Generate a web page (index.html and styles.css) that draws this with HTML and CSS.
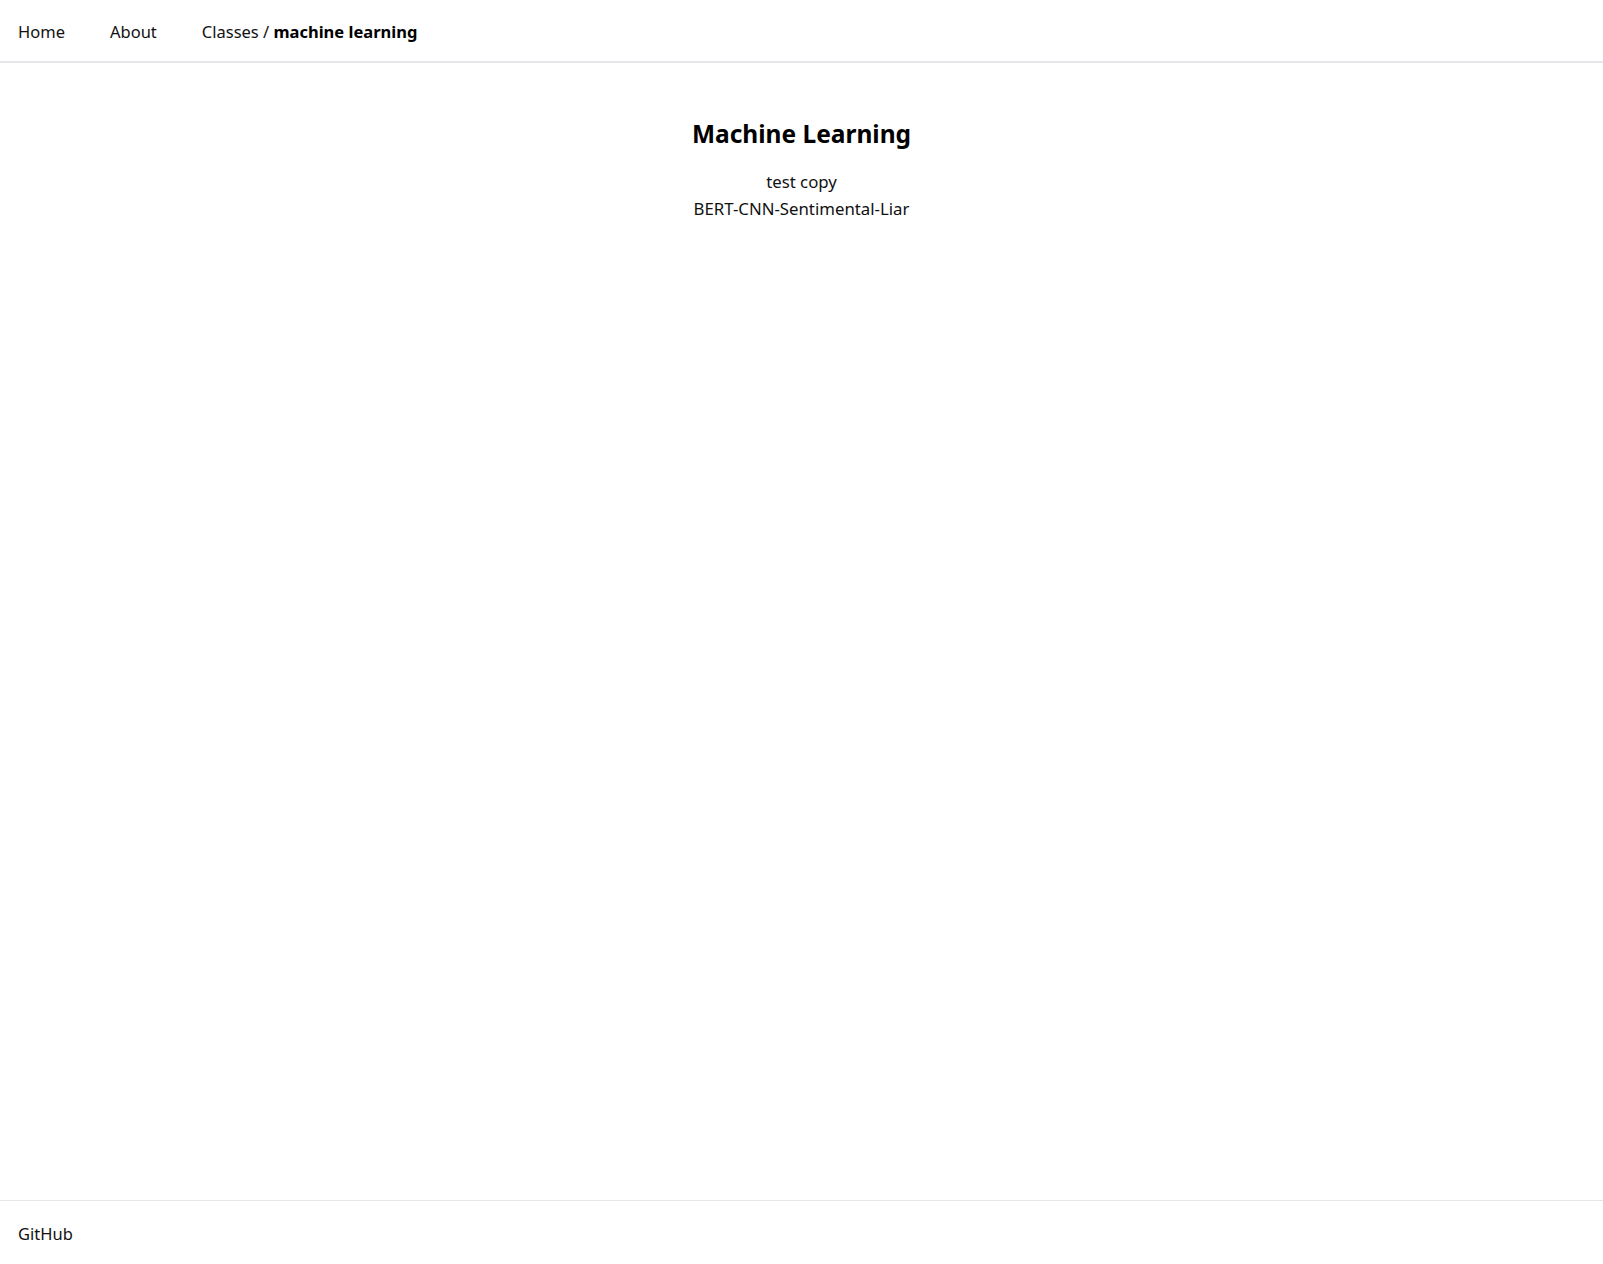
FILE: index.html
```html
<!DOCTYPE html>
<html lang="en">
<head>
<meta charset="utf-8">
<title>Machine Learning</title>
<link rel="stylesheet" href="styles.css">
</head>
<body>
<div class="page">
  <header class="topbar">
    <nav class="nav">
      <a class="nav-link" href="#">Home</a>
      <a class="nav-link" href="#">About</a>
      <span class="nav-link crumb">Classes / <strong>machine learning</strong></span>
    </nav>
  </header>
  <main class="content">
    <h1 class="title">Machine Learning</h1>
    <ul class="items">
      <li>test copy</li>
      <li>BERT-CNN-Sentimental-Liar</li>
    </ul>
  </main>
  <footer class="footer">
    <a class="nav-link" href="#">GitHub</a>
  </footer>
</div>
</body>
</html>
```

FILE: styles.css
```css
html, body {
  margin: 0;
  padding: 0;
  background: #fff;
}
body {
  font-family: "Noto Sans", "Open Sans", sans-serif;
  font-size: 16.5px;
  color: #111;
}
.page {
  min-height: 1264px;
  display: flex;
  flex-direction: column;
}
.topbar {
  height: 61px;
  border-bottom: 2px solid #e6e6ea;
  display: flex;
  align-items: center;
}
.nav {
  display: flex;
  gap: 45px;
  padding: 2px 18px 0;
}
.nav-link {
  color: #111;
  text-decoration: none;
}
.crumb strong {
  font-weight: 700;
  color: #000;
}
.content {
  flex: 1;
  text-align: center;
  padding-top: 53px;
}
.title {
  margin: 0 0 16px;
  font-size: 24.5px;
  font-weight: 700;
  color: #000;
  line-height: 36px;
}
.items {
  list-style: none;
  margin: 0;
  padding: 0;
  font-size: 16.8px;
  line-height: 27px;
}
.footer {
  height: 61px;
  border-top: 1px solid #e6e6ea;
  display: flex;
  align-items: center;
  padding: 2px 18px 0;
}
```
